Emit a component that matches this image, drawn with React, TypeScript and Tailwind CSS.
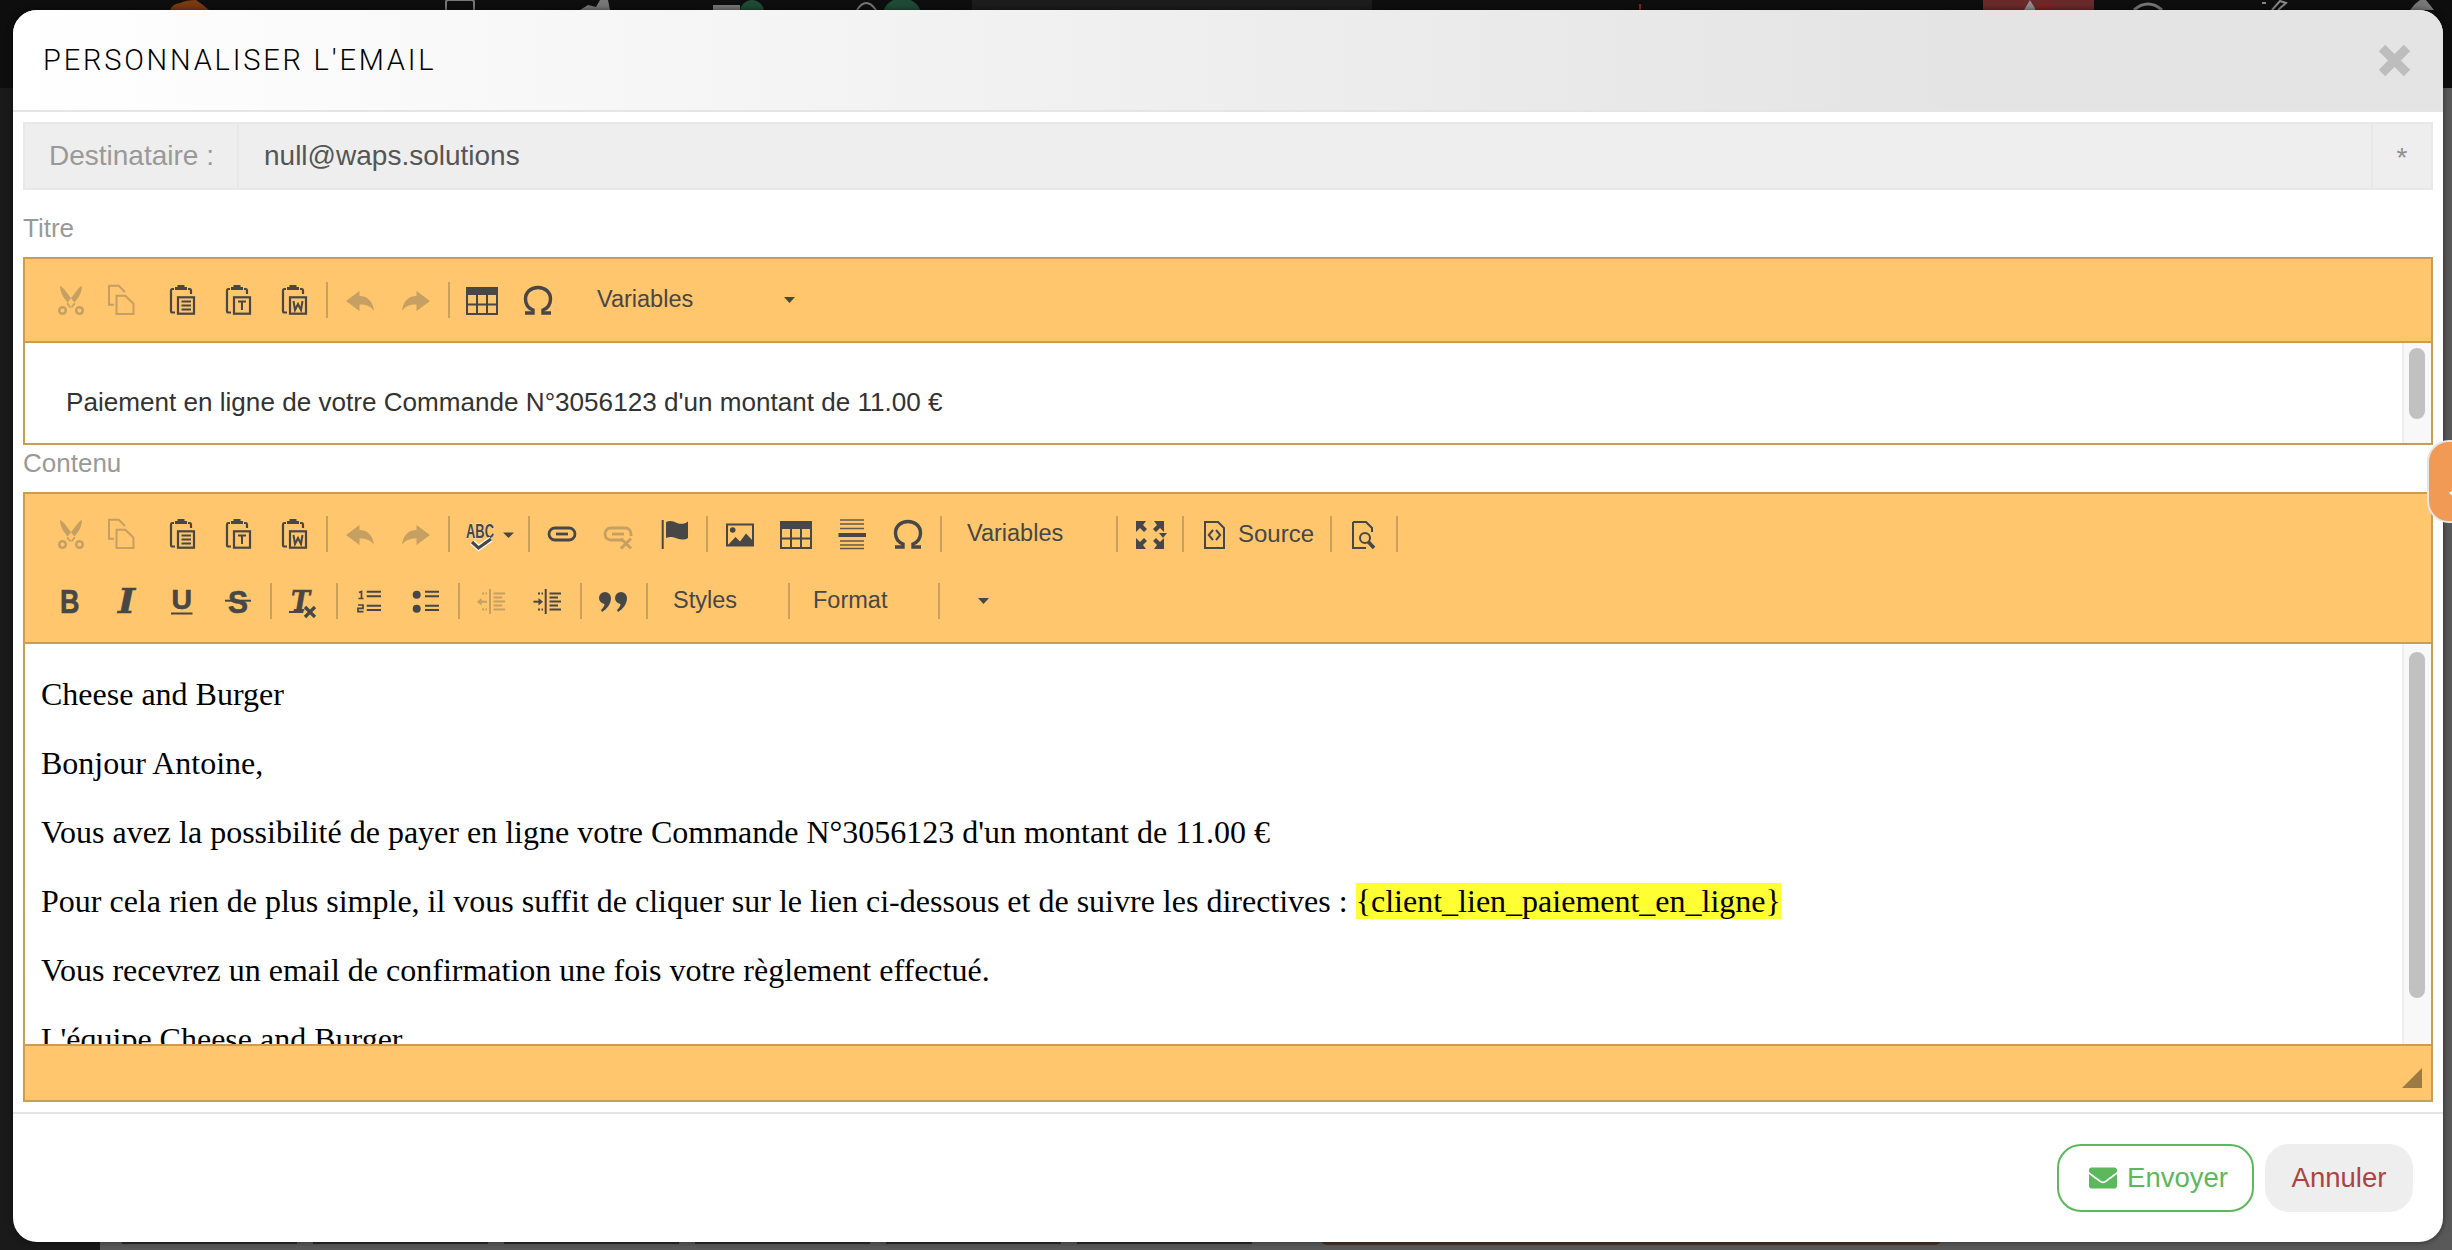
import type { ReactNode } from 'react'
import { FaEnvelope } from 'react-icons/fa'

const INK = 'text-[#474747]'

function Svg({ children, w = 32, h = 32 }: { children: ReactNode; w?: number; h?: number }) {
    return (
        <svg width={w} height={h} viewBox={`0 0 ${w} ${h}`} fill="none" stroke="currentColor" strokeWidth={2} className="overflow-visible">
            {children}
        </svg>
    )
}

function Btn({ off, children }: { off?: boolean; children: ReactNode }) {
    return (
        <div className={`flex w-[56px] shrink-0 items-center justify-center ${off ? 'opacity-30' : ''}`}>{children}</div>
    )
}

function Sep() {
    return (
        <div className="flex w-[10px] shrink-0 justify-center">
            <div className="h-[36px] w-[2px] bg-[#c9a05e]" />
        </div>
    )
}

const Cut = () => (
    <Svg>
        <g transform="translate(1 0)">
            <path d="M5 2 Q8 3 12 9 L20.500 20 L17 24 L9 14 Q5 8 5 2 Z M27 2 Q24 3 20 9 L11.500 20 L15 24 L23 14 Q27 8 27 2 Z" fill="currentColor" stroke="none" />
            <circle cx="7.500" cy="26.500" r="3.300" strokeWidth={2.500} />
            <circle cx="24.500" cy="26.500" r="3.300" strokeWidth={2.500} />
        </g>
    </Svg>
)

const Copy = () => (
    <Svg>
        <g transform="translate(-2 0)">
            <path d="M6 20.700 H1 V1.700 H10.700 L17 8" />
            <path d="M8.500 11.700 H17.300 L25.500 19.700 V30 H8.500 Z" />
        </g>
    </Svg>
)

function PasteBase({ children }: { children: ReactNode }) {
    return (
        <Svg>
            <path d="M8 5 H6 Q5 5 5 6.500 V27 Q5 28.500 6.500 28.500 H9 M22 5 H24 Q25 5 25 6.500 V10" strokeWidth={2.200} />
            <path d="M11.500 1 H18.500 V3 H21 V6 H9 V3 H11.500 Z" fill="currentColor" stroke="none" />
            <rect x="12" y="13.300" width="16" height="16.400" strokeWidth={2.200} />
            {children}
        </Svg>
    )
}

const Paste = () => (
    <PasteBase>
        <path d="M15.500 17.500 H25 M15.500 21.500 H25 M15.500 25.500 H25" />
    </PasteBase>
)

const PasteText = () => (
    <PasteBase>
        <path d="M16 17.500 H24 M20 17.500 V26" />
    </PasteBase>
)

const PasteWord = () => (
    <PasteBase>
        <path d="M15.500 17 L17 26 L20 20 L23 26 L24.500 17" />
    </PasteBase>
)

const Undo = () => (
    <Svg>
        <path d="M2 17 L15.500 7 V12 C24 12 29 18 30 27 C27 22 22 20.500 15.500 20.500 V27 Z" fill="currentColor" stroke="none" />
    </Svg>
)

const Redo = () => (
    <Svg>
        <path d="M30 17 L16.500 7 V12 C8 12 3 18 2 27 C5 22 10 20.500 16.500 20.500 V27 Z" fill="currentColor" stroke="none" />
    </Svg>
)

const TableIcon = () => (
    <Svg>
        <rect x="0" y="3" width="32" height="8" fill="currentColor" stroke="none" />
        <rect x="1" y="4" width="30" height="26" />
        <path d="M11 11 V30 M21 11 V30 M1 20.500 H31" />
    </Svg>
)

const Omega = () => (
    <Svg>
        <path
            d="M3 29 H11 V26 C6 24 3.500 20 3.500 15 C3.500 8 9 3.500 16 3.500 C23 3.500 28.500 8 28.500 15 C28.500 20 26 24 21 26 V29 H29"
            strokeWidth={3.400}
        />
    </Svg>
)

const Spell = () => (
    <svg width="70" height="36" viewBox="0 0 70 36" className="overflow-visible">
        <text x="12" y="22" fontSize="21" fontWeight="700" fontFamily="Liberation Sans" fill="currentColor" stroke="#fff" strokeWidth="0.500" paintOrder="stroke" textLength="28" lengthAdjust="spacingAndGlyphs">
            ABC
        </text>
        <path d="M18 26 L24.500 32 L37 23" fill="none" stroke="#fff" strokeWidth="5.500" />
        <path d="M18 26 L24.500 32 L37 23" fill="none" stroke="currentColor" strokeWidth="3.200" />
        <path d="M49 16.500 H60 L54.500 22 Z" fill="currentColor" />
    </svg>
)

const LinkIcon = () => (
    <Svg>
        <rect x="3" y="10" width="26" height="12" rx="6" strokeWidth={2.800} />
        <path d="M10 16 H22" strokeWidth={2.800} />
    </Svg>
)

const Unlink = () => (
    <Svg>
        <path d="M21 22 H9 C5 22 3 19 3 16 C3 13 5 10 9 10 H23 C27 10 29 13 29 16 V18" strokeWidth={2.800} />
        <path d="M10 16 H22" strokeWidth={2.800} />
        <path d="M19 20.500 L29 30.500 M29 20.500 L19 30.500" strokeWidth={3} />
    </Svg>
)

const Flag = () => (
    <Svg>
        <path d="M4.700 2 V31" />
        <path d="M8 4 C12 2 15 3 19 5 C23 6.500 27 6 30 3.500 V20 C27 22 23 22 19 20.500 C15 19 12 18.500 8 20 Z" fill="currentColor" stroke="none" />
    </Svg>
)

const ImageIcon = () => (
    <Svg>
        <rect x="3" y="6.500" width="26" height="21" />
        <circle cx="8.700" cy="12" r="2.800" fill="currentColor" stroke="none" />
        <path d="M3 28 L11.500 19 L16 23.500 L22 15.500 L29 23 V28 Z" fill="currentColor" stroke="none" />
    </Svg>
)

const Hr = () => (
    <Svg>
        <rect x="2.500" y="15" width="27.500" height="4" fill="currentColor" stroke="none" />
        <path d="M4 2 H28 M4 6 H28 M4 10.500 H28 M4 23 H28 M4 27 H28 M4 30.500 H28" strokeWidth={1.600} opacity="0.85" />
    </Svg>
)

const Maximize = () => (
    <Svg>
        <g fill="currentColor" stroke="none">
            <path d="M2 3 H12 L9 7 L13 11 L10 14 L6 10 L2 14 Z" />
            <path d="M30 3 H20 L23 7 L19 11 L22 14 L26 10 L30 14 Z" />
            <path d="M2 31 H12 L9 27 L13 23 L10 20 L6 24 L2 20 Z" />
            <path d="M30 31 H20 L23 27 L19 23 L22 20 L26 24 L30 20 Z" />
            <path d="M25 15 H33 L29 20 Z" />
        </g>
    </Svg>
)

const SourceIcon = () => (
    <Svg>
        <path d="M7 4 H20 L26 10 V30 H7 Z" />
        <path d="M15 12 L10.800 17 L15 22 M18 12 L22.200 17 L18 22" />
    </Svg>
)

const Preview = () => (
    <Svg>
        <path d="M5 4 H18 L24 10 V14 M18 30 H5 V4" />
        <circle cx="17" cy="20" r="5" />
        <path d="M20.500 24 L26 30" strokeWidth={3.500} />
    </Svg>
)

function Glyph({ x, y, size, len, family, italic, t }: { x: number; y: number; size: number; len: number; family: string; italic?: boolean; t: string }) {
    return (
        <text x={x} y={y} fontSize={size} fontWeight="700" fontStyle={italic ? 'italic' : 'normal'} fontFamily={family} fill="currentColor" stroke="currentColor" strokeWidth={0.600} textLength={len} lengthAdjust="spacingAndGlyphs">
            {t}
        </text>
    )
}

const Bold = () => (
    <Svg>
        <Glyph x={6} y={28} size={33} len={19.500} family="Liberation Sans" t="B" />
    </Svg>
)

const Italic = () => (
    <Svg>
        <Glyph x={8} y={28} size={33} len={17} family="DejaVu Serif" italic t="I" />
    </Svg>
)

const Underline = () => (
    <Svg>
        <Glyph x={5.500} y={23.500} size={27} len={20.500} family="Liberation Sans" t="U" />
        <path d="M5 28.500 H26.500" />
    </Svg>
)

const Strike = () => (
    <Svg>
        <Glyph x={6} y={28} size={32} len={20} family="Liberation Sans" t="S" />
        <path d="M3 15.700 H29" />
    </Svg>
)

const RemoveFormat = () => (
    <Svg>
        <Glyph x={3} y={25.500} size={28} len={19} family="DejaVu Serif" italic t="T" />
        <path d="M1 27 H15.300" />
        <path d="M17 22 L27 32 M27 22 L17 32" strokeWidth={3.200} />
    </Svg>
)

const NumList = () => (
    <Svg>
        <path d="M12.700 6.700 H27 M12.700 11.300 H27 M12.700 20.700 H27 M12.700 25 H27" />
        <path d="M5 7.500 L7.500 6.500 V13.500 M4.500 13.500 H9.500" strokeWidth={1.700} />
        <path d="M4 20 H9 V23.300 H4 V26.700 H9.500" strokeWidth={1.700} />
    </Svg>
)

const BulList = () => (
    <Svg>
        <path d="M15 6.700 H29 M15 11.300 H29 M15 20.700 H29 M15 25 H29" />
        <circle cx="6.700" cy="9.700" r="4" fill="currentColor" stroke="none" />
        <circle cx="6.700" cy="23.700" r="4" fill="currentColor" stroke="none" />
    </Svg>
)

const IndentLines = () => (
    <path d="M17.500 8.500 H29 M17.500 12.500 H26 M17.500 16.500 H29 M17.500 20.500 H26 M17.500 24.500 H29" strokeWidth={1.800} />
)

const Outdent = () => (
    <Svg>
        <path d="M14 4 V29" />
        <IndentLines />
        <path d="M6 8.500 H11 M6 24.500 H11" strokeDasharray="2 1.500" />
        <path d="M3 16.700 H11" />
        <path d="M1 16.700 L5.500 13 V20.400 Z" fill="currentColor" stroke="none" />
    </Svg>
)

const Indent = () => (
    <Svg>
        <path d="M13.700 4 V29" />
        <IndentLines />
        <path d="M6 8.500 H11 M6 24.500 H11" strokeDasharray="2 1.500" />
        <path d="M1.500 16.700 H8" />
        <path d="M11 16.700 L6.500 13 V20.400 Z" fill="currentColor" stroke="none" />
    </Svg>
)

const Quote = () => (
    <Svg>
        <g fill="currentColor" stroke="none">
            <path d="M1 13 A6 6 0 1 1 13 13 C13 19 9 24 4 27 L3 25 C5 23 6.500 21 6.500 19 A6 6 0 0 1 1 13 Z" />
            <path d="M17 13 A6 6 0 1 1 29 13 C29 19 25 24 20 27 L19 25 C21 23 22.500 21 22.500 19 A6 6 0 0 1 17 13 Z" />
        </g>
    </Svg>
)

const Caret = () => (
    <svg width="11" height="6" viewBox="0 0 11 6">
        <path d="M0 0 H11 L5.500 6 Z" fill="currentColor" />
    </svg>
)

function ClipboardGroup() {
    return (
        <>
            <Btn off><Cut /></Btn>
            <Btn off><Copy /></Btn>
            <Btn><Paste /></Btn>
            <Btn><PasteText /></Btn>
            <Btn><PasteWord /></Btn>
            <Sep />
            <Btn off><Undo /></Btn>
            <Btn off><Redo /></Btn>
            <Sep />
        </>
    )
}

function Scrollbar({ thumb, top }: { thumb: string; top: string }) {
    return (
        <div className={`w-[29px] shrink-0 border-l-2 border-[#eeeeee] bg-[#f8f8f8] pl-[5px] ${top}`}>
            <div className={`w-[16px] rounded-full bg-[#c1c1c1] ${thumb}`} />
        </div>
    )
}

function TopBackdrop() {
    return (
        <svg width="2452" height="10" viewBox="0 0 2452 10" className="block">
            <rect x="972" width="400" height="10" fill="#1c1c1c" />
            <path d="M170 10 Q172 4 180 3 Q186 0 196 0 Q202 4 209 10 Z" fill="#7a3a12" />
            <path d="M446 10 V2 Q446 0 449 0 H471 Q474 0 474 2 V10" fill="none" stroke="#777" strokeWidth="2" />
            <path d="M580 10 L588 5 L596 7 L600 0 H608 L610 10 Z" fill="#777" />
            <rect x="713" y="5" width="27" height="5" fill="#777" />
            <circle cx="752" cy="12" r="12" fill="#1f4a36" />
            <path d="M857 10 Q866 -4 876 10" fill="none" stroke="#777" strokeWidth="2" />
            <circle cx="902" cy="18" r="20" fill="#1f4a36" />
            <rect x="1639" y="4" width="2" height="6" fill="#8a1f1f" />
            <rect x="1983" width="111" height="10" fill="#6b2a2a" />
            <path d="M2024 10 L2030 0 L2036 10 Z" fill="#8f8f8f" />
            <circle cx="2046" cy="14" r="12" fill="#7a2424" />
            <path d="M2134 10 Q2148 -2 2162 10" fill="none" stroke="#777" strokeWidth="3" />
            <path d="M2262 3 L2266 3 M2272 10 L2280 1 L2286 3 L2278 10" fill="none" stroke="#888" strokeWidth="2" />
            <path d="M2410 10 L2415 4 L2420 0 H2426 L2434 10 Z" fill="#777" />
        </svg>
    )
}

const paragraphs = [
    'Cheese and Burger',
    'Bonjour Antoine,',
    "Vous avez la possibilité de payer en ligne votre Commande N°3056123 d'un montant de 11.00 €",
]

export default function App() {
    return (
        <div className="relative h-[1250px] w-[2452px] overflow-hidden bg-[#595959] font-['Liberation_Sans',sans-serif]">
            {/* page behind the dialog */}
            <div className="h-[88px] bg-[#0e0e0e]">
                <TopBackdrop />
            </div>
            <div className="h-[1162px] w-[100px] bg-[#1a1a1a]" />
            <div className="absolute left-[122px] top-[1230px] flex gap-[16px]">
                {[0, 1, 2, 3, 4, 5].map((i) => (
                    <div key={i} className="h-[14px] w-[175px] bg-[#2a2a2a]" />
                ))}
            </div>
            <div className="absolute left-[1321px] top-[1230px] h-[15px] w-[620px] rounded-b-[6px] bg-[#4a3220]" />

            {/* dialog */}
            <div className="absolute left-[13px] top-[10px] flex h-[1232px] w-[2430px] flex-col rounded-[24px] bg-white shadow-[0_0_6px_rgba(0,0,0,0.55)]">
                <div className="flex h-[102px] shrink-0 items-center justify-between rounded-t-[24px] border-b-2 border-[#e5e5e5] bg-gradient-to-r from-white to-[#e4e4e4] to-80% pl-[30px] pr-[32px]">
                    <h4 className="pt-[2px] font-['Roboto',sans-serif] text-[29px] font-light tracking-[2.800px] text-black">PERSONNALISER L'EMAIL</h4>
                    <svg width="33" height="33" viewBox="0 0 33 33">
                        <path d="M4 4 L29 29 M29 4 L4 29" stroke="#bdbdbd" strokeWidth="9" />
                    </svg>
                </div>

                <div className="flex-1 px-[10px] pt-[10px]">
                    <div className="flex h-[68px] border-2 border-[#e8e8e8] bg-[#eeeeee]">
                        <div className="flex w-[214px] items-center border-r-2 border-[#e8e8e8] pl-[24px] text-[28px] text-[#999999]">Destinataire :</div>
                        <div className="flex flex-1 items-center pl-[25px] text-[28px] text-[#555555]">null@waps.solutions</div>
                        <div className="flex w-[60px] items-center justify-center border-l-2 border-[#e8e8e8] pt-[3px] text-[28px] text-[#8f8f8f]">*</div>
                    </div>

                    <div className="h-[67px] pt-[19px] text-[26px] leading-[38px] text-[#999999]">Titre</div>

                    <div className="h-[188px] border-2 border-[#c99e54]">
                        <div className={`flex h-[84px] items-center border-b-2 border-[#c99e54] bg-[#ffc66e] pl-[17px] ${INK}`}>
                            <ClipboardGroup />
                            <Btn><TableIcon /></Btn>
                            <Btn><Omega /></Btn>
                            <div className="ml-[31px] flex w-[198px] items-center justify-between text-[23.500px]">
                                <span>Variables</span>
                                <Caret />
                            </div>
                        </div>
                        <div className="flex h-[100px]">
                            <div className="flex-1 pl-[41px] pt-[39px] text-[26.100px] leading-[40px] text-[#333333]">
                                Paiement en ligne de votre Commande N°3056123 d'un montant de 11.00 €
                            </div>
                            <Scrollbar top="pt-[5px]" thumb="h-[71px]" />
                        </div>
                    </div>

                    <div className="h-[47px] text-[26px] leading-[36px] text-[#999999]">Contenu</div>

                    <div className="flex h-[610px] flex-col border-2 border-[#c99e54]">
                        <div className={`h-[150px] shrink-0 border-b-2 border-[#c99e54] bg-[#ffc66e] pl-[17px] pt-[6px] ${INK}`}>
                            <div className="flex h-[67px] items-center">
                                <ClipboardGroup />
                                <div className="flex w-[70px] shrink-0 items-center"><Spell /></div>
                                <Sep />
                                <Btn><LinkIcon /></Btn>
                                <Btn off><Unlink /></Btn>
                                <Btn><Flag /></Btn>
                                <Sep />
                                <Btn><ImageIcon /></Btn>
                                <Btn><TableIcon /></Btn>
                                <Btn><Hr /></Btn>
                                <Btn><Omega /></Btn>
                                <Sep />
                                <div className="w-[166px] shrink-0 pl-[21px] text-[23.500px]">Variables</div>
                                <Sep />
                                <Btn><Maximize /></Btn>
                                <Sep />
                                <div className="flex w-[138px] shrink-0 items-center gap-[8px] pl-[10px] text-[24px]">
                                    <SourceIcon />
                                    <span>Source</span>
                                </div>
                                <Sep />
                                <Btn><Preview /></Btn>
                                <Sep />
                            </div>
                            <div className="flex h-[67px] items-center">
                                <Btn><Bold /></Btn>
                                <Btn><Italic /></Btn>
                                <Btn><Underline /></Btn>
                                <Btn><Strike /></Btn>
                                <Sep />
                                <Btn><RemoveFormat /></Btn>
                                <Sep />
                                <Btn><NumList /></Btn>
                                <Btn><BulList /></Btn>
                                <Sep />
                                <Btn off><Outdent /></Btn>
                                <Btn><Indent /></Btn>
                                <Sep />
                                <Btn><Quote /></Btn>
                                <Sep />
                                <div className="w-[132px] shrink-0 pl-[21px] text-[23.500px]">Styles</div>
                                <Sep />
                                <div className="w-[140px] shrink-0 pl-[19px] text-[23.500px]">Format</div>
                                <Sep />
                                <div className="ml-[34px]"><Caret /></div>
                            </div>
                        </div>
                        <div className="flex h-[400px] shrink-0">
                            <div className="flex-1 overflow-hidden pl-[16px] pt-[28px] font-['Liberation_Serif',serif] text-[32px] leading-[45px] text-black">
                                {paragraphs.map((p) => (
                                    <p key={p} className="mb-[24px]">{p}</p>
                                ))}
                                <p className="mb-[24px]">
                                    Pour cela rien de plus simple, il vous suffit de cliquer sur le lien ci-dessous et de suivre les directives :{' '}
                                    <span className="bg-[#ffff33]">{'{client_lien_paiement_en_ligne}'}</span>
                                </p>
                                <p className="mb-[24px]">Vous recevrez un email de confirmation une fois votre règlement effectué.</p>
                                <p className="mb-[24px]">L'équipe Cheese and Burger</p>
                            </div>
                            <Scrollbar top="pt-[8px]" thumb="h-[346px]" />
                        </div>
                        <div className="flex flex-1 items-end justify-end border-t-2 border-[#c99e54] bg-[#ffc66e] pb-[12px] pr-[9px]">
                            <svg width="20" height="20" viewBox="0 0 20 20">
                                <path d="M20 0 V20 H0 Z" fill="#9a7a45" />
                            </svg>
                        </div>
                    </div>
                </div>

                <div className="flex h-[130px] shrink-0 items-center justify-end gap-[11px] border-t-2 border-[#e5e5e5] pr-[30px]">
                    <button className="flex h-[68px] w-[197px] items-center justify-center gap-[10px] rounded-[24px] border-2 border-[#5cb85c] bg-white pl-[6px] text-[27.500px] text-[#5cb85c]">
                        <FaEnvelope size={28} />
                        Envoyer
                    </button>
                    <button className="h-[68px] w-[148px] rounded-[24px] bg-[#eeeeee] text-[27.500px] text-[#a94442]">Annuler</button>
                </div>
            </div>

            {/* side tab */}
            <div className="absolute left-[2427px] top-[440px] flex h-[83px] w-[40px] items-center rounded-l-[22px] border-2 border-[#e6e6e6] bg-[#f09a55] pl-[20px] pt-[22px]">
                <svg width="8" height="12" viewBox="0 0 8 12">
                    <path d="M8 0 V12 L0 6 Z" fill="#fff" />
                </svg>
            </div>
        </div>
    )
}
